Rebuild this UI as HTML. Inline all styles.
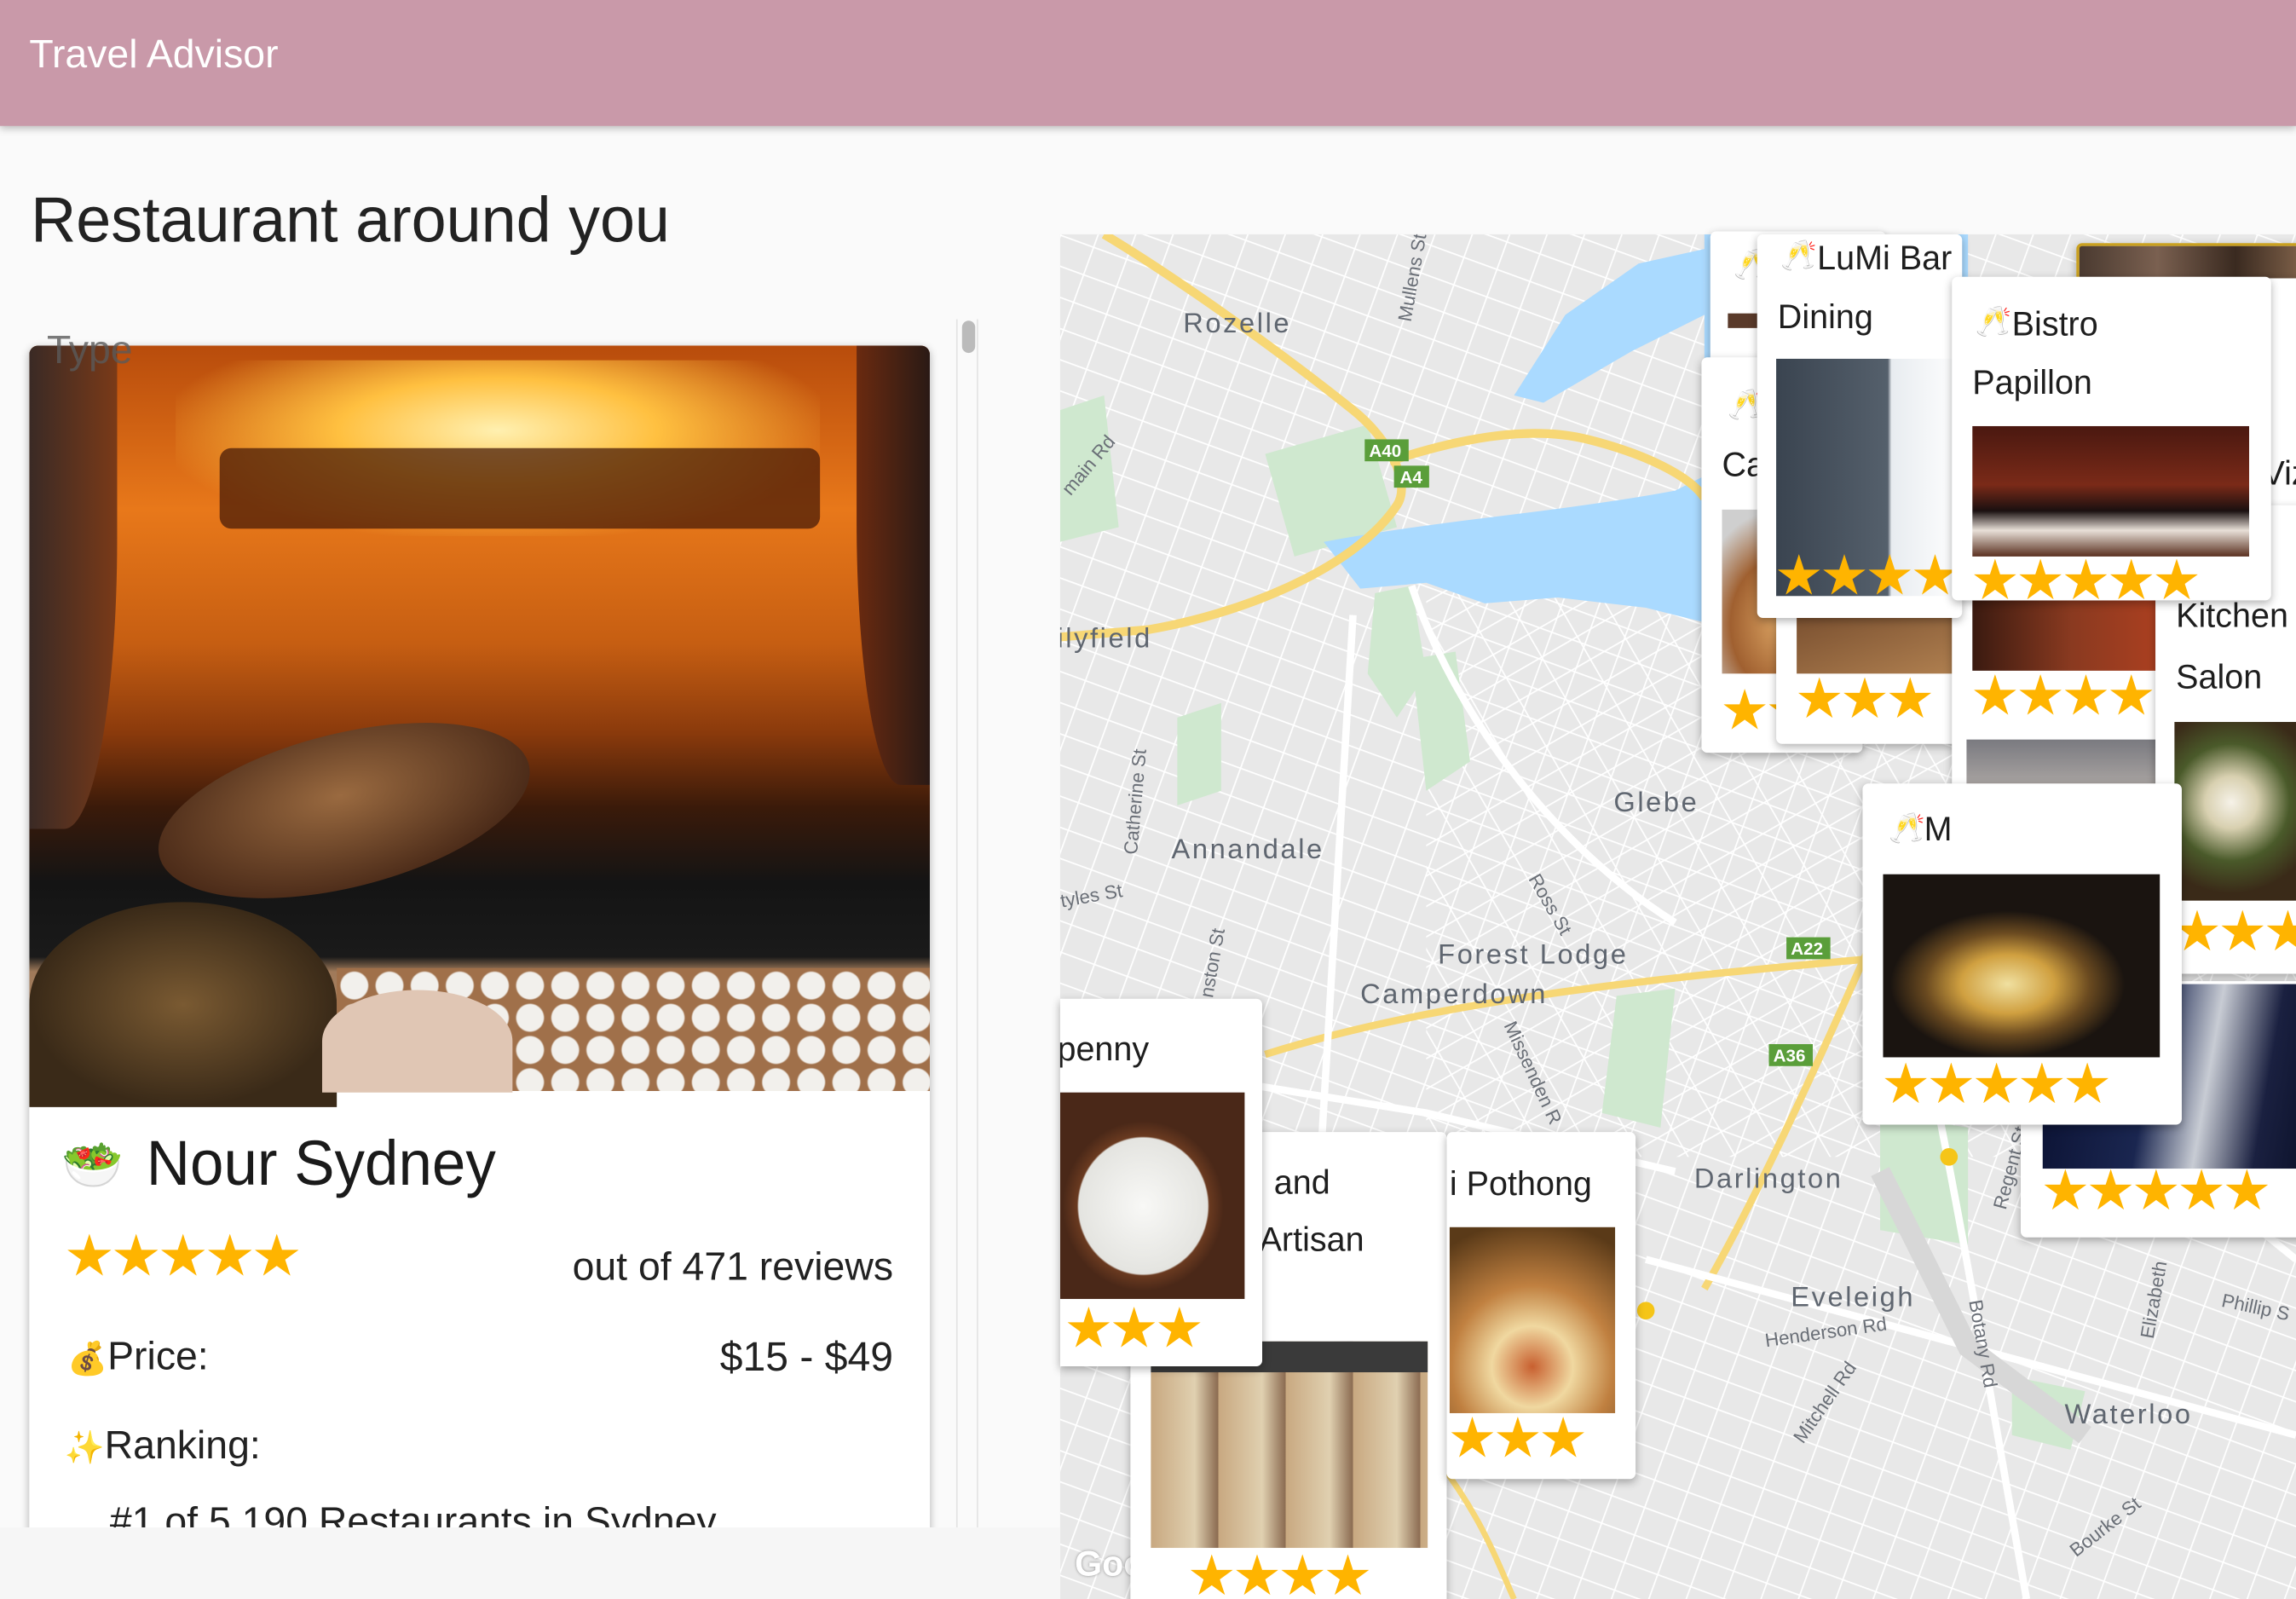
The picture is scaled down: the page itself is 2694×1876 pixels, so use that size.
<!DOCTYPE html>
<html><head><meta charset="utf-8"><style>
html,body{margin:0;padding:0;width:2694px;height:1876px;overflow:hidden;background:#fafafa;font-family:"Liberation Sans","Noto Sans CJK JP",sans-serif;}
#s{position:absolute;left:0;top:0;width:1568px;height:1092px;transform:scale(1.71811);transform-origin:0 0;overflow:hidden;}
.a{position:absolute;}
.c{position:absolute;background:#fff;border-radius:4px;box-shadow:0 2px 6px rgba(0,0,0,.3);overflow:hidden;}
.st{position:absolute;color:#ffb400;font-size:31px;letter-spacing:0px;line-height:1;white-space:nowrap;}
.t{position:absolute;font-size:23px;color:#1e1e1e;white-space:nowrap;font-weight:500;}
.im{position:absolute;}
.lbl{position:absolute;color:#5f6670;font-size:19px;letter-spacing:1.5px;white-space:nowrap;}
.sm{position:absolute;color:#6a6f77;font-size:13px;white-space:nowrap;}
</style></head><body><div id="s">
<div class="a" style="left:0;top:0;width:1568px;height:86px;background:#c999a9;box-shadow:0 2px 5px rgba(0,0,0,.25);z-index:5"></div>
<div class="a" style="left:20px;top:22px;font-size:27px;color:#fff;z-index:6">Travel Advisor</div>
<div class="a" style="left:21px;top:126px;font-size:44px;color:#222;transform:scaleX(.975);transform-origin:0 0">Restaurant around you</div>
<div class="a" style="left:653px;top:218px;width:1px;height:825px;background:#e4e4e4"></div>
<div class="a" style="left:667px;top:218px;width:1px;height:825px;background:#e4e4e4"></div>
<div class="a" style="left:657px;top:219px;width:9px;height:22px;background:#bbb;border-radius:5px"></div>
<div class="c" style="left:20px;top:236px;width:615px;height:820px;border-radius:6px">
 <div class="im" style="left:0;top:0;width:615px;height:509px;background:linear-gradient(180deg,#b84c0c 0%,#e8781a 22%,#c65e12 40%,#8a3a0c 52%,#3a1a0a 62%,#141414 72%,#1a1a1a 82%,#a07a5a 84%,#b08a6a 100%);"></div>
 <div class="im" style="left:100px;top:10px;width:440px;height:120px;background:radial-gradient(ellipse at 50% 40%,#fff0b0 0%,#ffc040 35%,rgba(240,120,20,0) 75%)"></div>
 <div class="im" style="left:130px;top:70px;width:410px;height:55px;background:#4a1c08;border-radius:8px;opacity:.75"></div>
 <div class="im" style="left:0;top:0;width:60px;height:330px;background:linear-gradient(90deg,#3a2a25,#7a3a18);border-radius:0 0 60% 0"></div>
 <div class="im" style="left:565px;top:0;width:50px;height:300px;background:linear-gradient(90deg,#6a2a10,#2a1a15);border-radius:0 0 0 60%"></div>
 <div class="im" style="left:85px;top:265px;width:260px;height:105px;background:radial-gradient(ellipse at 50% 40%,#9a6a40,#4a2a18 75%);border-radius:50%;transform:rotate(-14deg)"></div>
 <div class="im" style="left:0;top:380px;width:210px;height:140px;background:radial-gradient(ellipse at 50% 50%,#7a5a32,#3a2a18 70%);border-radius:50% 50% 0 0"></div>
 <div class="im" style="left:210px;top:425px;width:405px;height:84px;background:radial-gradient(circle at 12px 12px,#f2f0ec 9px,#a0704a 10px) 0 0/24px 22px"></div>
 <div class="im" style="left:200px;top:440px;width:130px;height:70px;background:#e0c6b4;border-radius:50% 50% 0 0"></div>
 <div class="a" style="left:22px;top:540px;font-size:34px">🥗</div>
 <div class="a" style="left:80px;top:535px;font-size:43px;color:#1a1a1a;transform:scaleX(.96);transform-origin:0 0">Nour Sydney</div>
 <div class="st" style="left:25px;top:606px;font-size:32px">★★★★★</div>
 <div class="a" style="right:25px;top:614px;font-size:27px;color:#222">out of 471 reviews</div>
 <div class="a" style="left:26px;top:675px;font-size:27px;color:#222"><span style="font-size:22px">💰</span>Price:</div>
 <div class="a" style="right:25px;top:675px;font-size:28px;color:#222">$15 - $49</div>
 <div class="a" style="left:24px;top:736px;font-size:27px;color:#222"><span style="font-size:22px">✨</span>Ranking:</div>
 <div class="a" style="left:55px;top:788px;font-size:27px;color:#222">#1 of 5,190 Restaurants in Sydney</div>
</div>
<div class="a" style="left:32px;top:224px;font-size:27px;color:rgba(90,90,90,.8);z-index:3">Type</div>
<div class="a" style="left:0;top:1043px;width:724px;height:49px;background:#f6f6f6"></div>
<div class="a" style="left:724px;top:160px;width:844px;height:932px;overflow:hidden;background:#e8e8e8">
<svg width="844" height="932" style="position:absolute;left:0;top:0">
 <defs>
  <pattern id="g1" width="24" height="20" patternUnits="userSpaceOnUse" patternTransform="rotate(20)"><path d="M0 0H24M0 0V20" stroke="#fff" stroke-width="2" fill="none"/></pattern>
  <pattern id="g2" width="28" height="18" patternUnits="userSpaceOnUse" patternTransform="rotate(-30)"><path d="M0 0H28M0 0V18" stroke="#fff" stroke-width="2" fill="none"/></pattern>
 </defs>
 <rect width="844" height="932" fill="url(#g1)"/>
 <rect x="250" y="230" width="594" height="400" fill="url(#g2)"/>
 <path d="M140 150 L210 130 L230 200 L160 220Z" fill="#cfe8cf"/>
 <path d="M215 245 L240 240 L250 300 L230 330 L210 300Z" fill="#cfe8cf"/>
 <path d="M240 290 L270 285 L280 360 L250 380Z" fill="#cfe8cf"/>
 <path d="M0 120 L30 110 L40 200 L0 210Z" fill="#cfe8cf"/>
 <path d="M80 330 L110 320 L110 380 L80 390Z" fill="#cfe8cf"/>
 <path d="M380 520 L420 515 L410 610 L370 600Z" fill="#cfe8cf"/>
 <path d="M560 600 L620 610 L620 690 L560 680Z" fill="#cfe8cf"/>
 <path d="M650 780 L700 790 L690 830 L650 820Z" fill="#cfe8cf"/>
 <path d="M310 110 L345 55 L395 20 L440 10 L440 55 L390 80 L330 115Z" fill="#aadaff"/>
 <path d="M440 0 L620 0 L620 70 L560 95 L490 130 L440 150Z" fill="#aadaff"/>
 <path d="M180 210 C260 195 340 190 420 175 L440 165 L480 170 L470 185 L440 195 L440 265 L400 255 L340 248 L290 252 L250 238 L205 242Z" fill="#aadaff"/>
 <path d="M30 0 C80 30 150 80 200 120 C225 140 240 170 230 185 C200 230 120 260 60 270 L0 275" stroke="#f7d775" stroke-width="6" fill="none"/>
 <path d="M225 155 C270 140 320 130 360 140 C400 150 430 165 440 180" stroke="#f7d775" stroke-width="6" fill="none"/>
 <path d="M140 560 C300 510 500 500 844 470" stroke="#f7d775" stroke-width="5" fill="none"/>
 <path d="M440 720 C480 650 520 560 560 470" stroke="#f7d775" stroke-width="5" fill="none"/>
 <path d="M260 840 C290 880 300 910 310 932" stroke="#f7d775" stroke-width="4" fill="none"/>
 <path d="M200 260 C190 400 180 600 160 932" stroke="#fff" stroke-width="5" fill="none"/>
 <path d="M240 240 C270 330 340 420 420 470" stroke="#fff" stroke-width="5" fill="none"/>
 <path d="M0 560 L250 600 L420 640" stroke="#fff" stroke-width="5" fill="none"/>
 <path d="M560 470 L844 700" stroke="#fff" stroke-width="5" fill="none"/>
 <path d="M400 700 L844 820" stroke="#fff" stroke-width="5" fill="none"/>
 <path d="M600 600 C620 700 640 820 660 932" stroke="#fff" stroke-width="5" fill="none"/>
 <path d="M560 640 L620 760 L700 820" stroke="#d7d7d7" stroke-width="14" fill="none"/>
 <rect x="208" y="140" width="30" height="15" fill="#5a9e3a"/><text x="211" y="152" font-size="12" fill="#fff" font-weight="bold" font-family="Liberation Sans">A40</text>
 <rect x="228" y="158" width="24" height="15" fill="#5a9e3a"/><text x="232" y="170" font-size="12" fill="#fff" font-weight="bold" font-family="Liberation Sans">A4</text>
 <rect x="496" y="480" width="30" height="15" fill="#5a9e3a"/><text x="499" y="492" font-size="12" fill="#fff" font-weight="bold" font-family="Liberation Sans">A22</text>
 <rect x="484" y="553" width="30" height="15" fill="#5a9e3a"/><text x="487" y="565" font-size="12" fill="#fff" font-weight="bold" font-family="Liberation Sans">A36</text>
 <circle cx="607" cy="630" r="6" fill="#f5c518"/><circle cx="400" cy="735" r="6" fill="#f5c518"/>
</svg>
<div class="lbl" style="left:84px;top:51px">Rozelle</div>
<div class="lbl" style="left:-2px;top:266px">ilyfield</div>
<div class="lbl" style="left:76px;top:410px">Annandale</div>
<div class="lbl" style="left:378px;top:378px">Glebe</div>
<div class="lbl" style="left:258px;top:482px">Forest Lodge</div>
<div class="lbl" style="left:205px;top:509px">Camperdown</div>
<div class="lbl" style="left:433px;top:635px">Darlington</div>
<div class="lbl" style="left:499px;top:716px">Eveleigh</div>
<div class="lbl" style="left:686px;top:796px">Waterloo</div>
<div class="sm" style="left:481px;top:742px;transform:rotate(-8deg)">Henderson Rd</div>
<div class="sm" style="left:15px;top:380px;transform:rotate(-85deg)">Catherine St</div>
<div class="sm" style="left:0;top:444px;transform:rotate(-10deg)">tyles St</div>
<div class="sm" style="left:-5px;top:150px;transform:rotate(-50deg)">main Rd</div>
<div class="sm" style="left:210px;top:22px;transform:rotate(-80deg)">Mullens St</div>
<div class="sm" style="left:312px;top:450px;transform:rotate(60deg)">Ross St</div>
<div class="sm" style="left:285px;top:565px;transform:rotate(65deg)">Missenden R</div>
<div class="sm" style="left:600px;top:750px;transform:rotate(80deg)">Botany Rd</div>
<div class="sm" style="left:490px;top:790px;transform:rotate(-55deg)">Mitchell Rd</div>
<div class="sm" style="left:620px;top:630px;transform:rotate(-75deg)">Regent St</div>
<div class="sm" style="left:720px;top:720px;transform:rotate(-80deg)">Elizabeth</div>
<div class="sm" style="left:793px;top:725px;transform:rotate(12deg)">Phillip S</div>
<div class="sm" style="left:685px;top:875px;transform:rotate(-38deg)">Bourke St</div>
<div class="sm" style="left:80px;top:490px;transform:rotate(-80deg)">nston St</div>
<div class="a" style="left:10px;top:895px;font-size:24px;color:#fff;font-weight:bold;text-shadow:0 0 2px #888">Google</div>
</div>
<div class="c" style="left:1418px;top:166px;width:160px;height:124px;background:linear-gradient(90deg,#4a3a30,#7a6050,#3a2a20,#8a6a50);border:2px solid #c9a020"></div>
<div class="c" style="left:1168px;top:158px;width:120px;height:95px"><div class="a" style="left:16px;top:10px;font-size:20px">🥂</div><div class="im" style="left:12px;top:56px;width:40px;height:10px;background:#5a3a2a"></div></div>
<div class="c" style="left:1162px;top:244px;width:110px;height:270px"><div class="a" style="left:18px;top:20px;font-size:20px">🥂</div><div class="t" style="left:14px;top:60px">Ca</div><div class="im" style="left:14px;top:104px;width:96px;height:112px;background:radial-gradient(ellipse at 40% 70%,#d8a060,#a06030 40%,#cfcfcf 70%)"></div><div class="st" style="left:14px;top:226px">★★</div></div>
<div class="c" style="left:1213px;top:380px;width:125px;height:128px"><div class="im" style="left:14px;top:40px;width:111px;height:40px;background:linear-gradient(160deg,#7a5030,#b08050)"></div><div class="st" style="left:14px;top:82px">★★★</div></div>
<div class="c" style="left:1333px;top:390px;width:150px;height:210px"><div class="im" style="left:14px;top:20px;width:136px;height:48px;background:linear-gradient(90deg,#3a1a10,#8a3a20,#b04020)"></div><div class="st" style="left:14px;top:70px">★★★★</div><div class="im" style="left:10px;top:115px;width:140px;height:52px;background:linear-gradient(180deg,#7a7a80,#c8c0b8)"></div><div class="st" style="left:10px;top:168px">★★★★</div></div>
<div class="c" style="left:1540px;top:190px;width:40px;height:160px"><div class="t" style="left:5px;top:120px">Viz</div></div>
<div class="c" style="left:1472px;top:345px;width:110px;height:320px"><div class="t" style="left:14px;top:62px">Kitchen</div><div class="t" style="left:14px;top:104px">Salon</div><div class="im" style="left:13px;top:148px;width:97px;height:122px;background:radial-gradient(circle at 40% 45%,#f6f2e8 0,#d8d0b0 20%,#4a5a2a 45%,#3a2a18 70%)"></div><div class="st" style="left:13px;top:276px">★★★</div></div>
<div class="c" style="left:1380px;top:670px;width:200px;height:175px"><div class="im" style="left:15px;top:2px;width:185px;height:126px;background:linear-gradient(100deg,#0a1030,#1a2650 40%,#c8ccd4 60%,#1a2040 80%,#0a1028)"></div><div class="st" style="left:15px;top:128px">★★★★★</div></div>
<div class="c" style="left:1272px;top:535px;width:218px;height:233px"><div class="a" style="left:18px;top:18px;font-size:20px">🥂</div><div class="t" style="left:42px;top:18px">M</div><div class="im" style="left:14px;top:62px;width:189px;height:125px;background:radial-gradient(ellipse 80px 50px at 45% 60%,#f0e0a0,#d0a040 40%,#6a4a20 70%,#1a1410 100%)"></div><div class="st" style="left:14px;top:190px">★★★★★</div></div>
<div class="c" style="left:1200px;top:160px;width:140px;height:262px"><div class="a" style="left:16px;top:2px;font-size:20px">🥂</div><div class="t" style="left:41px;top:3px">LuMi Bar &amp;</div><div class="t" style="left:14px;top:43px">Dining</div><div class="im" style="left:13px;top:85px;width:127px;height:162px;background:linear-gradient(90deg,#3a4450,#55606c 60%,#e8ecf0 62%,#fff)"></div><div class="st" style="left:13px;top:218px">★★★★</div></div>
<div class="c" style="left:1333px;top:189px;width:218px;height:221px"><div class="a" style="left:16px;top:18px;font-size:20px">🥂</div><div class="t" style="left:41px;top:19px">Bistro</div><div class="t" style="left:14px;top:59px">Papillon</div><div class="im" style="left:14px;top:102px;width:189px;height:89px;background:linear-gradient(180deg,#4a1810,#7a2a18 45%,#1a1010 65%,#e8e0d8 80%,#5a3020)"></div><div class="st" style="left:14px;top:192px">★★★★★</div></div>
<div class="c" style="left:772px;top:773px;width:216px;height:330px"><div class="t" style="left:98px;top:21px">and</div><div class="t" style="left:88px;top:60px">Artisan</div><div class="im" style="left:14px;top:143px;width:189px;height:141px;background:linear-gradient(180deg,#3a3a3a 0,#3a3a3a 15%,transparent 15%),repeating-linear-gradient(90deg,#c8a880 0,#e0d0b0 30px,#8a6a50 46px);"></div><div class="st" style="left:40px;top:288px">★★★★</div></div>
<div class="c" style="left:724px;top:682px;width:138px;height:251px;border-radius:0 4px 4px 0"><div class="t" style="left:-2px;top:21px">penny</div><div class="im" style="left:0;top:64px;width:126px;height:141px;background:radial-gradient(ellipse 55px 58px at 45% 55%,#f8f8f6,#e4e4e0 80%,#6a3a20 82%,#4a2818)"></div><div class="st" style="left:4px;top:210px">★★★</div></div>
<div class="c" style="left:988px;top:773px;width:129px;height:237px"><div class="t" style="left:2px;top:22px">i Pothong</div><div class="im" style="left:2px;top:65px;width:113px;height:127px;background:radial-gradient(circle at 50% 75%,#c86030,#f0d8a0 25%,#c08040 50%,#5a3a18 90%)"></div><div class="st" style="left:2px;top:194px">★★★</div></div>
</div></body></html>
